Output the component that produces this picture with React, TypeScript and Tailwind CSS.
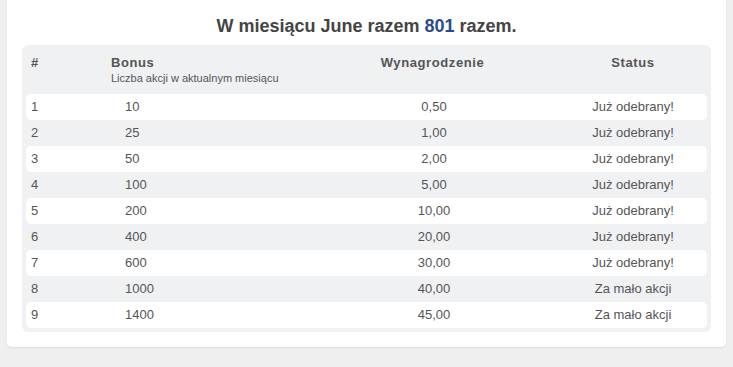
type Row = {
  id: number;
  bonus: number;
  reward: string;
  status: string;
};

const rows: Row[] = [
  { id: 1, bonus: 10, reward: '0,50', status: 'Już odebrany!' },
  { id: 2, bonus: 25, reward: '1,00', status: 'Już odebrany!' },
  { id: 3, bonus: 50, reward: '2,00', status: 'Już odebrany!' },
  { id: 4, bonus: 100, reward: '5,00', status: 'Już odebrany!' },
  { id: 5, bonus: 200, reward: '10,00', status: 'Już odebrany!' },
  { id: 6, bonus: 400, reward: '20,00', status: 'Już odebrany!' },
  { id: 7, bonus: 600, reward: '30,00', status: 'Już odebrany!' },
  { id: 8, bonus: 1000, reward: '40,00', status: 'Za mało akcji' },
  { id: 9, bonus: 1400, reward: '45,00', status: 'Za mało akcji' },
];

export default function App() {
  return (
    <div
      className="min-h-screen bg-[#efefef] px-[7px] pb-[20px] text-[#555]"
      style={{ fontFamily: '"Liberation Sans", Arial, sans-serif' }}
    >
      <div className="rounded-b-[5px] bg-white px-[15px] pb-[15px] pt-[14px] shadow-[0_1px_2px_rgba(0,0,0,0.08)]">
        <h1 className="mb-[7px] text-center text-[18px] font-bold leading-[24px] text-[#444]">
          W miesiącu June razem <span className="text-[#2b4c8c]">801</span> razem.
        </h1>

        <div className="rounded-[6px] bg-[#f0f1f3] px-[4px] pb-[4px]">
          <div className="grid grid-cols-[79px_225px_208px_170px] pb-[9px] pt-[10px] text-[13px] font-bold leading-[16px] tracking-[0.6px]">
            <div className="pl-[5px]">#</div>
            <div className="pl-[6px]">
              <div>Bonus</div>
              <div className="mt-[1px] text-[11px] font-normal leading-[13px] tracking-normal">
                Liczba akcji w aktualnym miesiącu
              </div>
            </div>
            <div className="pr-[3px] text-center">Wynagrodzenie</div>
            <div className="pl-[20px] text-center">Status</div>
          </div>

          {rows.map((row) => (
            <div
              key={row.id}
              className={`grid h-[26px] grid-cols-[79px_225px_208px_170px] rounded-[5px] text-[13px] leading-[26px] ${
                row.id % 2 === 1 ? 'bg-white' : 'bg-transparent'
              }`}
            >
              <div className="pl-[5px]">{row.id}</div>
              <div className="pl-[20px]">{row.bonus}</div>
              <div className="text-center">{row.reward}</div>
              <div className="pl-[20px] text-center">{row.status}</div>
            </div>
          ))}
        </div>
      </div>
    </div>
  );
}
